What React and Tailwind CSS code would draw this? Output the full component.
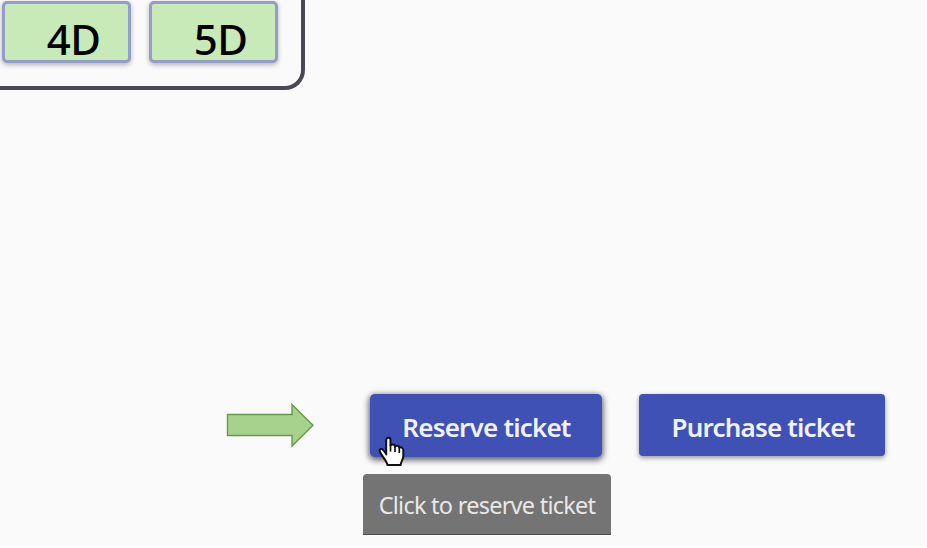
const seatNumbers = ["4D", "5D"];

function SeatPanel() {
  return (
    <section className="flex h-[90px] w-[305px] gap-[18px] rounded-br-[20px] border-r-4 border-b-4 border-[#494955] pt-px pl-[2px]">
      {seatNumbers.map((seat) => (
        <button
          key={seat}
          className="h-[62px] w-[129px] rounded-[5px] border-[3px] border-[#929dca] bg-[#c8e9b8] pt-[13px] pl-[14px] text-[42px] leading-[42px] font-medium tracking-[-0.5px] text-black shadow-[0_2px_5px_rgba(0,0,0,0.28)]"
        >
          {seat}
        </button>
      ))}
    </section>
  );
}

function Arrow() {
  return (
    <svg className="mt-[9px] h-[46px] w-[90px]" viewBox="0 0 90 46" aria-hidden="true">
      <path
        d="M2.5 11.5H67V1.5L88 22.2L67 43V32.5H2.5Z"
        fill="#a7d28d"
        stroke="#68994b"
        strokeWidth="1.4"
      />
    </svg>
  );
}

function HandCursor() {
  return (
    <svg
      className="absolute top-[42px] left-[8px] h-[32px] w-[28px]"
      viewBox="0 0 28 32"
      aria-hidden="true"
    >
      <path
        d="M8.2 18.5V4C8.2 1 12.5 1 12.5 4V9.5C13.5 7.8 17 8 17 10.5C18.3 9.2 21 9.5 21.3 11.5C23 10.8 25.3 11.8 25.3 14.5V20C25.3 23.5 23 25 22.7 29H9.5C9 25.5 4.5 21 2 16C0.8 13 3.3 11.8 5.2 14L8.2 18Z"
        fill="#fff"
        stroke="#111"
        strokeWidth="2"
        strokeLinejoin="round"
      />
      <path d="M12.5 9V15.5M17 10.5V16M21.3 11.5V17" stroke="#111" strokeWidth="1.7" />
    </svg>
  );
}

export default function App() {
  return (
    <main className="flex h-[548px] w-[927px] flex-col overflow-hidden border-r-2 border-b-2 border-white bg-[#fafafa] font-['Noto_Sans',sans-serif]">
      <SeatPanel />
      <div className="mt-[304px] flex items-start pl-[225px]">
        <Arrow />
        <div className="ml-[48px] flex w-[276px] flex-col">
          <button className="relative ml-[7px] h-[63px] w-[232px] rounded-[5px] bg-[#3f51b5] pt-[4px] pl-[1px] text-[26px] font-semibold tracking-[-0.8px] whitespace-nowrap text-[#f0f1f9] shadow-[0_2px_6px_1px_rgba(0,0,0,0.65)]">
            Reserve ticket
            <HandCursor />
          </button>
          <div className="mt-[17px] flex h-[61px] w-[248px] items-center justify-center rounded-t-[4px] border-b border-[#4c4c4c] bg-[#747474] pt-[4px] text-[23.5px] tracking-[-0.75px] whitespace-nowrap text-[#e8e8e8]">
            Click to reserve ticket
          </div>
        </div>
        <button className="h-[62px] w-[246px] rounded-[4px] bg-[#3f51b5] pt-[4px] pl-[2px] text-[26px] font-semibold tracking-[-0.8px] whitespace-nowrap text-[#f0f1f9] shadow-[0_2px_5px_rgba(0,0,0,0.4)]">
          Purchase ticket
        </button>
      </div>
    </main>
  );
}
